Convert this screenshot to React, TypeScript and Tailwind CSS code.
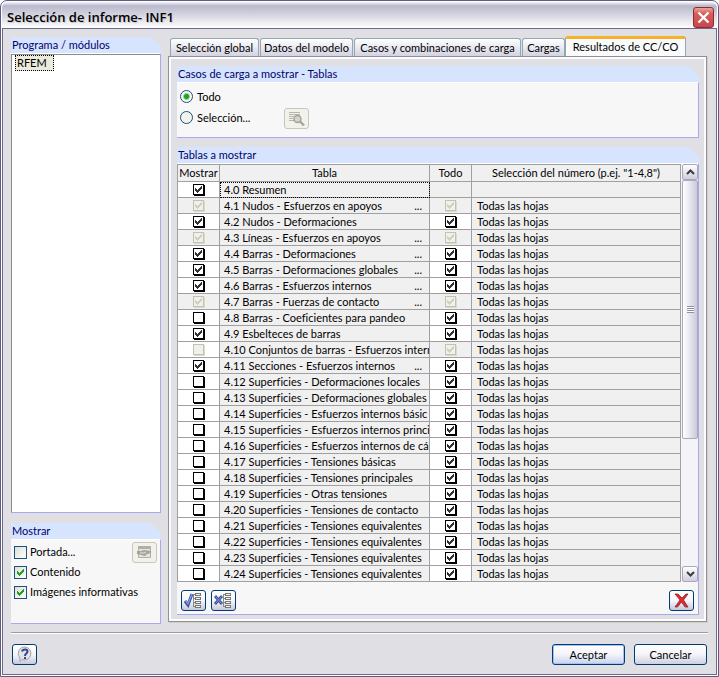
import React from 'react';

type Check = 'on' | 'off' | 'disabled-on' | 'disabled-off';

interface Row {
  name: string;
  show: Check;
  all?: Check;
  more?: boolean;
}

const rows: Row[] = [
  { name: '4.0 Resumen', show: 'on' },
  { name: '4.1 Nudos - Esfuerzos en apoyos', show: 'disabled-on', all: 'disabled-on', more: true },
  { name: '4.2 Nudos - Deformaciones', show: 'on', all: 'on' },
  { name: '4.3 Líneas - Esfuerzos en apoyos', show: 'disabled-on', all: 'disabled-on', more: true },
  { name: '4.4 Barras - Deformaciones', show: 'on', all: 'on', more: true },
  { name: '4.5 Barras - Deformaciones globales', show: 'on', all: 'on', more: true },
  { name: '4.6 Barras - Esfuerzos internos', show: 'on', all: 'on', more: true },
  { name: '4.7 Barras - Fuerzas de contacto', show: 'disabled-on', all: 'disabled-on', more: true },
  { name: '4.8 Barras - Coeficientes para pandeo', show: 'off', all: 'on' },
  { name: '4.9 Esbelteces de barras', show: 'on', all: 'on' },
  { name: '4.10 Conjuntos de barras - Esfuerzos intern', show: 'disabled-off', all: 'disabled-on' },
  { name: '4.11 Secciones - Esfuerzos internos', show: 'on', all: 'on', more: true },
  { name: '4.12 Superficies - Deformaciones locales', show: 'off', all: 'on' },
  { name: '4.13 Superficies - Deformaciones globales', show: 'off', all: 'on' },
  { name: '4.14 Superficies - Esfuerzos internos básic', show: 'off', all: 'on' },
  { name: '4.15 Superficies - Esfuerzos internos princi', show: 'off', all: 'on' },
  { name: '4.16 Superficies - Esfuerzos internos de cá', show: 'off', all: 'on' },
  { name: '4.17 Superficies - Tensiones básicas', show: 'off', all: 'on' },
  { name: '4.18 Superficies - Tensiones principales', show: 'off', all: 'on' },
  { name: '4.19 Superficies - Otras tensiones', show: 'off', all: 'on' },
  { name: '4.20 Superficies - Tensiones de contacto', show: 'off', all: 'on' },
  { name: '4.21 Superficies - Tensiones equivalentes', show: 'off', all: 'on' },
  { name: '4.22 Superficies - Tensiones equivalentes', show: 'off', all: 'on' },
  { name: '4.23 Superficies - Tensiones equivalentes', show: 'off', all: 'on' },
  { name: '4.24 Superficies - Tensiones equivalentes', show: 'off', all: 'on' },
];

const tabs = [
  { label: 'Selección global', width: 'w-[89px]' },
  { label: 'Datos del modelo', width: 'w-[93px]' },
  { label: 'Casos y combinaciones de carga', width: 'w-[167px]' },
  { label: 'Cargas', width: 'w-[43px]' },
];

const Group: React.FC<{ title: string; className?: string; children: React.ReactNode }> = ({
  title,
  className = '',
  children,
}) => (
  <section className={`flex flex-col ${className}`}>
    <h2 className="h-4 pl-px leading-4 text-[#000070] bg-[#d7e4fd] [clip-path:polygon(0_0,calc(100%-10px)_0,100%_10px,100%_100%,0_100%)]">
      {title}
    </h2>
    <div className="flex flex-1 flex-col border-r border-b border-[#a8a8ee] border-t border-t-white bg-[#f7f7f7]">
      {children}
    </div>
  </section>
);

// Checkbox of the grid cells, with a hard drop shadow
const CellCheck: React.FC<{ state: Check; label: string }> = ({ state, label }) => {
  const disabled = state.startsWith('disabled');
  const checked = state.endsWith('on');
  return (
    <span className="relative mx-auto block size-[11px]">
      <input
        type="checkbox"
        aria-label={label}
        defaultChecked={checked}
        disabled={disabled}
        className="peer block size-[11px] appearance-none border border-black bg-white shadow-[1px_1px_0_#000] disabled:border-[#c4c1b0] disabled:bg-[#f0f0ec] disabled:shadow-[1px_1px_0_#dedbcc]"
      />
      <svg
        viewBox="0 0 11 11"
        className="pointer-events-none absolute inset-0 hidden size-[11px] text-[#333] peer-checked:block peer-disabled:text-[#d3d0c0]"
        shapeRendering="crispEdges"
        fill="currentColor"
      >
        <path d="M2 4h1v1h1v1h1v-1h1v-1h1v-1h1v-1h1v3h-1v1h-1v1h-1v1h-1v1h-1v-1h-1v-1h-1z" />
      </svg>
    </span>
  );
};

const Option: React.FC<{ label: string; checked?: boolean }> = ({ label, checked }) => (
  <label className="flex h-5 items-center gap-[3px]">
    <span className="relative block size-[13px]">
      <input
        type="checkbox"
        defaultChecked={checked}
        className="peer block size-[13px] appearance-none border border-[#1c5180] bg-linear-to-br from-[#dcdcd7] to-white"
      />
      <svg
        viewBox="0 0 13 13"
        className="pointer-events-none absolute inset-0 hidden size-[13px] peer-checked:block"
        shapeRendering="crispEdges"
      >
        <path d="M3 5h1v1h1v1h1v-1h1v-1h1v-1h1v-1h1v3h-1v1h-1v1h-1v1h-1v1h-1v-1h-1v-1h-1z" fill="#21a121" />
      </svg>
    </span>
    {label}
  </label>
);

const Radio: React.FC<{ label: string; checked?: boolean }> = ({ label, checked }) => (
  <label className="flex h-[21px] w-[101px] items-center gap-1">
    <input
      type="radio"
      name="casos"
      defaultChecked={checked}
      className="block size-[13px] appearance-none rounded-full border border-[#1c5180] bg-[#f2f2ef] checked:bg-[radial-gradient(circle,#21a121_0_2px,#8fd48f_3px,#f8f8f6_4px)]"
    />
    {label}
  </label>
);

const iconButton =
  'flex h-[21px] w-[25px] items-center justify-center rounded-[3px] border border-[#003c74] bg-linear-to-b from-white via-[#f6f6fa] to-[#c8c8dc]';
const disabledButton =
  'flex h-[21px] w-[25px] items-center justify-center rounded-[3px] border border-[#c9c7ba] bg-[#f3f2ea]';
const textButton = 'h-[21px] w-[73px] rounded-[3px] border border-[#003c74] bg-linear-to-b';

const Tree = () => (
  <g shapeRendering="crispEdges">
    <path d="M9.500 2v13M9 2.500h3M9 6.500h3M9 10.500h3M9 14.500h3" stroke="#888" fill="none" />
    <g fill="#f4f4f4" stroke="#777">
      <rect x="11.500" y="1.500" width="5" height="2" />
      <rect x="11.500" y="5.500" width="5" height="2" />
      <rect x="11.500" y="9.500" width="5" height="2" />
      <rect x="11.500" y="13.500" width="5" height="2" />
    </g>
  </g>
);

const ScrollArrow: React.FC<{ label: string; d: string }> = ({ label, d }) => (
  <button
    type="button"
    aria-label={label}
    className="flex h-4 w-full items-center justify-center rounded-[2px] border border-[#a9a9bd] bg-linear-to-b from-white to-[#cfcfdf]"
  >
    <svg width="9" height="6" viewBox="0 0 9 6" fill="none" stroke="#3c3c3c" strokeWidth="2">
      <path d={d} />
    </svg>
  </button>
);

const App: React.FC = () => {
  return (
    <div className="flex min-h-screen flex-col overflow-hidden rounded-t-[7px] border border-[#5d5c80] bg-white p-px font-['Lato','Liberation_Sans',sans-serif] text-[11px] leading-4 text-black [font-variant-ligatures:none]">
      {/* Title bar */}
      <header className="flex h-[26px] items-center justify-between rounded-t-[6px] bg-linear-to-b from-[#f4f4f8] via-[#b9b9cc] via-15% to-white pt-1 pr-[3px] pl-[5px]">
        <h1 className="font-['Open_Sans','Noto_Sans',sans-serif] text-[13px] font-semibold leading-5 [text-shadow:1px_1px_1px_#c4c4d0]">
          Selección de informe- INF1
        </h1>
        <button
          type="button"
          aria-label="Cerrar"
          className="flex size-[21px] items-center justify-center rounded-[3px] border border-[#8c2b36] bg-linear-to-b from-[#e9a29a] via-[#d85a58] via-30% to-[#c9484e]"
        >
          <svg width="13" height="13" viewBox="0 0 13 13" stroke="#fff" strokeWidth="2.4">
            <path d="M1.5 1.5l10 10M11.5 1.5l-10 10" />
          </svg>
        </button>
      </header>

      <div className="flex flex-1 flex-col border border-[#6c6b8c] bg-[#e0dfe3] px-2">
        <main className="flex flex-1 gap-[7px] pt-2">
          {/* Left column */}
          <aside className="flex w-[150px] shrink-0 flex-col gap-[10px]">
            <Group title="Programa / módulos" className="flex-1">
              <ul className="flex-1 border-t border-l border-[#8c8c8c] bg-white pl-[3px]">
                <li className="h-4 w-[39px] border border-dotted border-black bg-[#eceadb] pl-px leading-[14px]">
                  RFEM
                </li>
              </ul>
            </Group>
            <Group title="Mostrar" className="h-[101px]">
              <div className="flex justify-between pt-0.5 pr-[3px] pl-[3px]">
                <div>
                  <Option label="Portada..." />
                  <Option label="Contenido" checked />
                  <Option label="Imágenes informativas" checked />
                </div>
                <button type="button" disabled aria-label="Editar portada" className={`${disabledButton} -ml-8 shrink-0`}>
                  <svg width="17" height="15" viewBox="0 0 17 15" fill="none">
                    <path d="M2.500 1.500h12v11h-12z" fill="#e4e4de" stroke="#b0b0a8" />
                    <path d="M2 1h13v3H2z" fill="#b0b0a8" />
                    <path d="M1 6h4l3-1 7 1v2l-4 1-2 2-4-1-4-1z" fill="#a4a49c" />
                    <path d="M4 8h4l2-1" stroke="#e4e4de" />
                  </svg>
                </button>
              </div>
            </Group>
          </aside>

          {/* Tabs and page */}
          <div className="flex min-w-0 flex-1 flex-col pr-px pb-0.5">
            <div role="tablist" className="-mb-px flex h-5 items-end pl-0.5">
              {tabs.map((tab) => (
                <button
                  key={tab.label}
                  type="button"
                  role="tab"
                  className={`${tab.width} mb-px mr-px h-[18px] shrink-0 whitespace-nowrap rounded-t-[3px] border border-b-0 border-[#91a7b4] bg-linear-to-b from-white to-[#d3d3e3]`}
                >
                  {tab.label}
                </button>
              ))}
              <button
                type="button"
                role="tab"
                aria-selected="true"
                className="-ml-px h-[21px] w-[121px] shrink-0 rounded-t-[3px] border border-t-[3px] border-b-0 border-[#91a7b4] border-t-[#f7b02c] bg-[#fbfbfc] pb-1"
              >
                Resultados de CC/CO
              </button>
            </div>
            <div className="flex flex-1 flex-col gap-[9px] border border-[#8f9297] bg-[#e0dfe3] pt-[9px] pr-[7px] pb-[6px] pl-2 shadow-[inset_0_0_0_2px_#fcfcfe,1px_1px_0_#cfcfc4]">
              <Group title="Casos de carga a mostrar - Tablas">
                <div className="flex h-[54px] items-end gap-[3px] pb-[8px] pl-[3px]">
                  <div className="pb-px">
                    <Radio label="Todo" checked />
                    <Radio label="Selección..." />
                  </div>
                  <button type="button" disabled aria-label="Seleccionar casos" className={disabledButton}>
                    <svg width="17" height="17" viewBox="0 0 17 17" fill="none">
                      <path d="M1 2.5h11M1 4.5h11M1 6.5h5M1 8.5h4M1 10.5h5" stroke="#b5b5ae" />
                      <circle cx="9.5" cy="9" r="3.5" fill="#d4d4ce" stroke="#a4a49c" strokeWidth="1.5" />
                      <path d="M12 11.5l4 4" stroke="#a4a49c" strokeWidth="2.4" />
                    </svg>
                  </button>
                </div>
              </Group>

              <Group title="Tablas a mostrar" className="flex-1">
                <div className="flex">
                  <div className="min-w-0 flex-1">
                    <table className="w-full table-fixed border-collapse bg-[#f0f0f0] [&_td]:border [&_td]:border-[#a0a0a0] [&_th]:border [&_th]:border-[#a0a0a0]">
                      <colgroup>
                        <col className="w-[42px]" />
                        <col className="w-[210px]" />
                        <col className="w-[42px]" />
                        <col />
                      </colgroup>
                      <thead>
                        <tr className="h-[17px]">
                          <th className="p-0 font-normal whitespace-nowrap">Mostrar</th>
                          <th className="p-0 font-normal">Tabla</th>
                          <th className="p-0 font-normal">Todo</th>
                          <th className="p-0 font-normal">Selección del número (p.ej. "1-4,8")</th>
                        </tr>
                      </thead>
                      <tbody className="leading-[15px]">
                        {rows.map((row, i) => (
                          <tr key={row.name} className="h-4">
                            <td className={row.show === 'disabled-on' ? 'p-0' : 'bg-white p-0'}>
                              <CellCheck state={row.show} label={`Mostrar ${row.name}`} />
                            </td>
                            <td className={i === 0 ? 'p-0 outline-1 -outline-offset-1 outline-dotted outline-black' : 'p-0'}>
                              <div className="flex h-[15px] justify-between overflow-hidden whitespace-nowrap pl-1">
                                <span>{row.name}</span>
                                {row.more && <span className="pr-[7px]">...</span>}
                              </div>
                            </td>
                            <td className={row.all && !row.all.startsWith('disabled') ? 'bg-white p-0' : 'p-0'}>
                              {row.all && <CellCheck state={row.all} label={`Todo ${row.name}`} />}
                            </td>
                            <td className="p-0 pl-[5px]">{row.all && 'Todas las hojas'}</td>
                          </tr>
                        ))}
                      </tbody>
                    </table>
                  </div>
                  <div className="ml-px flex w-4 flex-col bg-[#f3f3f8]">
                    <ScrollArrow label="Subir" d="M1 5l3.500-3.500L8 5" />
                    <div className="flex h-[259px] items-center justify-center rounded-[2px] border border-[#a9a9bd] bg-linear-to-r from-white via-[#e6e6ef] to-[#c9c9da]">
                      <div className="h-[7px] w-[7px] bg-[repeating-linear-gradient(#8f8fa5_0_1px,#fff_1px_2px)]" />
                    </div>
                    <div className="flex-1" />
                    <ScrollArrow label="Bajar" d="M1 1l3.500 3.500L8 1" />
                  </div>
                </div>
                <div className="flex items-center gap-[5px] px-1 py-2 pb-[3px]">
                  <button type="button" aria-label="Marcar todo" className={iconButton}>
                    <svg width="19" height="17" viewBox="0 0 19 17">
                      <Tree />
                      <path d="M1 9l3 4 4-11" fill="none" stroke="#3a4c94" strokeWidth="3" />
                      <path d="M1.500 9l2.500 3 4-10" fill="none" stroke="#7d9ae8" strokeWidth="1.4" />
                    </svg>
                  </button>
                  <button type="button" aria-label="Desmarcar todo" className={iconButton}>
                    <svg width="19" height="17" viewBox="0 0 19 17">
                      <Tree />
                      <path d="M1 4l7 8M8 4l-7 8" fill="none" stroke="#3a4c94" strokeWidth="2.8" />
                      <path d="M1.500 4.500l6 7M7.500 4.500l-6 7" fill="none" stroke="#7d9ae8" />
                    </svg>
                  </button>
                  <button type="button" aria-label="Borrar" className={`${iconButton} ml-auto`}>
                    <svg width="15" height="15" viewBox="0 0 15 15">
                      <path d="M1 1h3l4 4 4-4h2l-4.500 6 4.500 7h-3l-3.500-5-4 5H1l5-7z" fill="#e8272c" stroke="#7c3030" strokeWidth=".8" />
                    </svg>
                  </button>
                </div>
              </Group>
            </div>
          </div>
        </main>

        <footer className="mt-2 flex items-center gap-[9px] border-t border-[#9c9ca0] pt-[11px] pr-px pb-[9px] pl-px shadow-[inset_0_1px_0_#fff]">
          <button type="button" aria-label="Ayuda" className={iconButton}>
            <svg width="17" height="17" viewBox="0 0 17 17">
              <path d="M9 1a6.500 6.500 0 1 1-3 12.500L4 15.500v-3.500A6.500 6.500 0 0 1 9 1z" fill="#e4e4e8" stroke="#a0a0a6" />
              <path d="M6 5.500q.5-2 3-2t2.500 2q0 1.200-1.200 2T9 10M9 11v2" fill="none" stroke="#34468f" strokeWidth="2" />
            </svg>
          </button>
          <button
            type="button"
            className={`${textButton} ml-auto from-white via-[#f4f4fa] to-[#c8d2ee] shadow-[inset_0_0_0_1px_#a9c1f0]`}
          >
            Aceptar
          </button>
          <button type="button" className={`${textButton} from-white via-[#f4f4fa] to-[#cfcfdf]`}>
            Cancelar
          </button>
        </footer>
      </div>
    </div>
  );
};

export default App;
